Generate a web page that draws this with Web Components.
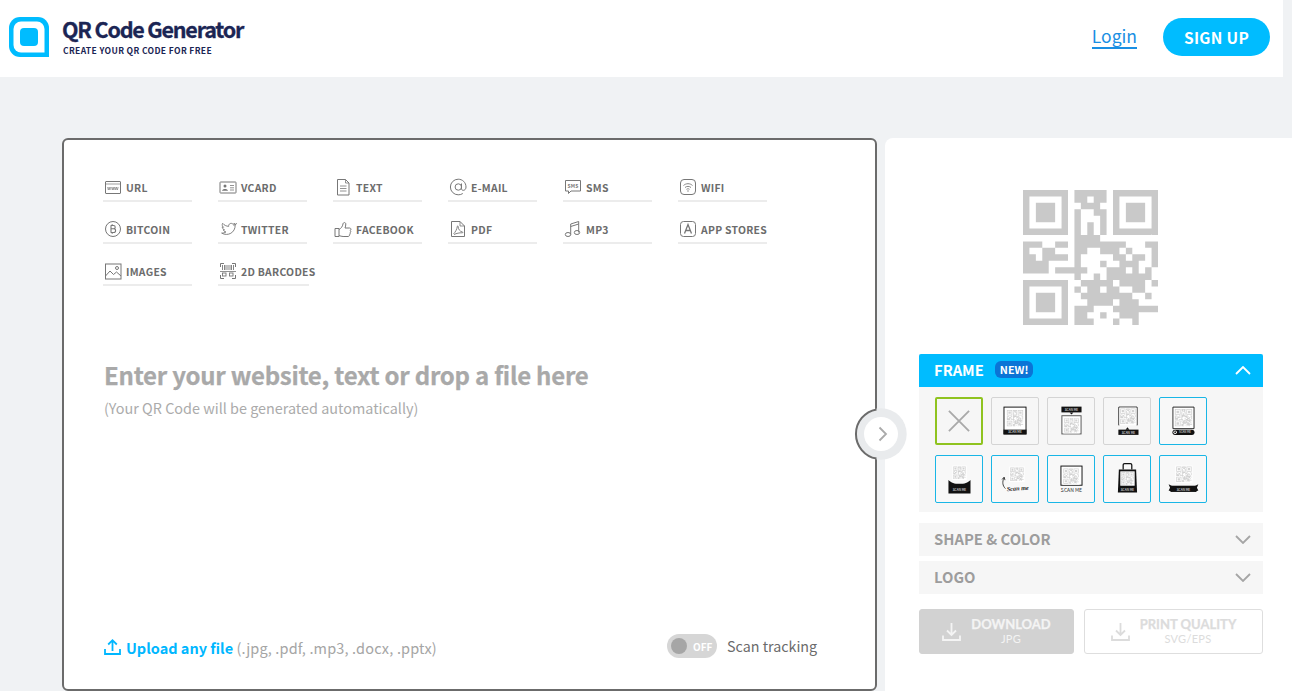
<!DOCTYPE html>
<html lang="en">
<head>
<meta charset="utf-8">
<title>QR Code Generator</title>
<style>
  html, body { margin: 0; height: 691px; overflow: hidden; background: #f0f2f4; }
  body { font-family: "Noto Sans CJK JP", "Source Sans Pro", "Open Sans", sans-serif; }
</style>
</head>
<body>
<qr-app></qr-app>
<script>
"use strict";

const QR_ROWS = [
  "111111101111101111111",
  "100000101101101000001",
  "101110100111001011101",
  "101110101001101011101",
  "101110101000101011101",
  "100000101010101000001",
  "111111101010101111111",
  "000000001111000000000",
  "111001101111111100011",
  "100110001100111010001",
  "110111101000001101101",
  "111100001000100111001",
  "111101111100011101010",
  "000000001001011111110",
  "111111100111110111101",
  "100000101011011001100",
  "101110100111111110010",
  "101110100011110111000",
  "101110101110001111111",
  "100000101100100111000",
  "111111101110001001000",
];

// path of the filled modules, at (x, y) with a given total size
function qrPath(x, y, size) {
  const m = size / 21;
  let d = "";
  QR_ROWS.forEach((row, r) => {
    [...row].forEach((cell, c) => {
      if (cell === "1") {
        d += `M${(x + c * m).toFixed(2)} ${(y + r * m).toFixed(2)}h${m.toFixed(2)}v${m.toFixed(2)}h-${m.toFixed(2)}z`;
      }
    });
  });
  return d;
}

const TAB_ICONS = {
  url: `<rect x="1.5" y="3.5" width="15" height="12" rx=".5"/><path d="M1.5 6h15" stroke-width=".7"/><path d="M3.5 9l.8 3 .8-3 .8 3 .8-3M7.5 9l.8 3 .8-3 .8 3 .8-3M11 9l.8 3 .8-3 .8 3 .8-3" stroke-width=".6"/>`,
  vcard: `<rect x="1" y="4" width="16" height="11" rx=".5"/><circle cx="6" cy="8" r="1.5" fill="#777" stroke="none"/><path d="M3 12.8c.5-2.5 5.500-2.500 6 0z" fill="#777" stroke="none"/><path d="M11 7.500h4M11 9.800h4M11 12h4" stroke-width=".8"/>`,
  text: `<path d="M3.500 1.500h8l3.500 3.500v12h-11.500z"/><path d="M11.500 1.500v3.500h3.500M6 8h6.500M6 10.500h6.500M6 13h6.500" stroke-width=".8"/>`,
  email: `<circle cx="9.300" cy="9" r="3.200"/><path d="M12.500 5.500v5.300c0 2.300 4.500 2.300 4.500-1.800 0-4.500-3.500-7.800-7.800-7.800a7.800 7.800 0 0 0 0 15.600c1.800 0 3.300-.4 4.600-1.300"/>`,
  sms: `<path d="M1.500 2.500h15v10.500h-9.500l-2.500 2.500v-2.500h-3z"/><text x="9" y="9.500" font-size="5" font-weight="700" text-anchor="middle" fill="#777" stroke="none" letter-spacing=".2">SMS</text>`,
  wifi: `<rect x="1.500" y="1.500" width="15" height="15" rx="3.500"/><path d="M4.500 7.500c2.500-2.400 6.500-2.400 9 0M6 9.500c1.700-1.500 4.300-1.500 6 0M7.500 11.300c.9-.7 2.100-.7 3 0" stroke-width=".9"/><circle cx="9" cy="13" r=".7" fill="#777" stroke="none"/>`,
  bitcoin: `<circle cx="9" cy="9" r="7.500"/><path d="M7 5.200v7.600M7 5.500h2.500c2.300 0 2.300 3.300 0 3.300h-2.500M9.500 8.800c2.800 0 2.800 3.700 0 3.700h-2.500M8.200 4.200v1.200M8.200 12.600v1.200" stroke-width="1.100"/>`,
  twitter: `<path d="M17 3.500c-.6.400-1.200.6-1.900.7.700-.5 1.100-1 1.300-1.800-.7.400-1.300.7-2 .8-1.900-2-5.200-.2-4.600 2.400-2.600-.1-5-1.300-6.600-3.300-.9 1.500-.4 3.300 1 4.300-.5 0-1-.2-1.400-.4 0 1.500 1 2.800 2.500 3.200-.5.100-.9.100-1.400 0 .4 1.300 1.600 2.200 2.900 2.200-1.400 1-3 1.500-4.700 1.300 6.700 4 15.100-.5 14.700-8.900.7-.4 1.300-1 1.700-1.500z" transform="matrix(.92 0 0 .92 .7 1.200)"/>`,
  facebook: `<path d="M1 8.500h4v8h-4zM5 9.500c2-1 3.500-3 4-5.500.2-1.800 2.600-2 2.800 0 .1 1.400-.4 2.800-.8 4h4.500c1.800 0 1.900 2.200.6 2.500 1 .6.800 2-.2 2.300.6.800.3 1.900-.6 2.100.3 1-.3 1.600-1.200 1.600h-5c-1.700 0-2.500-.6-4-.9"/>`,
  pdf: `<path d="M2.500 1.500h8.500l4.500 4.500v10.500h-13z"/><path d="M11 1.500v4.500h4.500" stroke-width=".8"/><path d="M4.500 13.800c1.500-1 3.500-4.500 3.800-7.300.1-1 1-.7.900.3-.2 2 1.800 4.800 4 5.100 1 .1.900 1-.1.900-2.600-.1-5.600.5-8.100 1.700" stroke-width=".9"/>`,
  mp3: `<ellipse cx="4" cy="14.500" rx="2.700" ry="2"/><ellipse cx="13" cy="12.500" rx="2.700" ry="2"/><path d="M6.700 14.500v-10.500l8-2.500v11M6.700 6.500l8-2.500"/>`,
  app: `<rect x="1.500" y="1.500" width="15" height="15" rx="3"/><path d="M5.500 13.500l3.500-9 3.500 9M6.700 10.500h4.600" stroke-width="1.300"/>`,
  images: `<rect x="1.500" y="2" width="15.500" height="15"/><path d="M1.500 14l4.500-5 3.500 3.500 3-2.500 4.500 4"/><circle cx="13" cy="6" r="1.500"/>`,
  barcodes: `<path d="M1.500 5v-3.500h3.500M13 1.500h3.500v3.500M1.500 13v3.500h3.500M13 16.500h3.500v-3.500"/><path d="M3.500 3v5M5.500 3v5M7 3v5M9 3v5M11 3v5M12.500 3v5M14.500 3v5" stroke-width=".9"/><path d="M1 9.500h16" stroke-width=".8"/><rect x="3.500" y="11" width="3.500" height="3" stroke-width=".9"/><rect x="10.500" y="11" width="3.500" height="3" stroke-width=".9"/>`,
};

class TabItem extends HTMLElement {
  constructor() {
    super();
    const icon = TAB_ICONS[this.getAttribute("icon")] || "";
    this.attachShadow({ mode: "open" }).innerHTML = `
      <style>
        :host { display: flex; align-items: center; gap: 4px; height: 23px; box-sizing: border-box;
          padding: 0 0 5px 1px; border-bottom: 2px solid #ececec; font-size: 10.400px; font-weight: 700;
          letter-spacing: .28px; color: #6c6c6c; white-space: nowrap; }
        svg { width: 18px; height: 18px; flex: none; fill: none; stroke: #777; stroke-width: 1; font-family: inherit; }
      </style>
      <svg viewBox="0 0 18 18">${icon}</svg><slot></slot>`;
  }
}
customElements.define("tab-item", TabItem);

class ConnectorArrow extends HTMLElement {
  constructor() {
    super();
    this.attachShadow({ mode: "open" }).innerHTML = `
      <style>
        :host { display: block; position: absolute; left: 790px; top: 267px; width: 54px; height: 54px; }
        svg { display: block; }
      </style>
      <svg width="54" height="54" viewBox="0 0 54 54" fill="none">
        <circle cx="27" cy="27" r="25.700" fill="#e9ebed"/>
        <path d="M22.500 2.400a25 25 0 0 0 0 49.200" stroke="#6b6b6b" stroke-width="2"/>
        <circle cx="27" cy="27" r="17" fill="#fff"/>
        <path d="M25.500 20.500l6.500 6.500-6.500 6.500" stroke="#aaa" stroke-width="1.800"/>
      </svg>`;
  }
}
customElements.define("connector-arrow", ConnectorArrow);

class MainCard extends HTMLElement {
  constructor() {
    super();
    this.attachShadow({ mode: "open" }).innerHTML = `
      <style>
        :host { display: flex; flex-direction: column; position: relative; box-sizing: border-box; flex: none;
          width: 815px; height: 553px; background: #fff; border: 2px solid #6b6b6b; border-radius: 6px;
          padding: 39px 0 0 39px; }
        .tabs { display: grid; grid-template-columns: repeat(6, 89px); column-gap: 26px; row-gap: 19px; }
        .tabs tab-item:last-child { width: 91px; }
        .prompt { flex: 1; padding: 70px 0 0 1px; }
        h1 { margin: 0; font-size: 24px; line-height: 38px; font-weight: 700; color: #a9a9a9; letter-spacing: -.25px; -webkit-text-stroke: .25px #a9a9a9; }
        p { margin: 2px 0 0; font-size: 14.400px; line-height: 24px; color: #ababab; }
        .foot { display: flex; align-items: center; height: 24px; margin-bottom: 31px; padding-left: 1px; font-size: 14.500px; }
        .upload { display: flex; align-items: center; gap: 5px; color: #a5a5a5; width: 563px; white-space: pre; padding-top: 2px; letter-spacing: .15px; }
        .upload b { color: #00b7ff; letter-spacing: 0; }
        .upload svg { width: 17px; height: 18px; flex: none; }
        .toggle { display: flex; align-items: center; width: 50px; height: 24px; box-sizing: border-box; padding-left: 4px; gap: 6px;
          border-radius: 12px; background: #d6d6d6; color: #fff; font-size: 10px; font-weight: 700; }
        .toggle i { width: 16px; height: 16px; border-radius: 50%; background: #a6a6a6; }
        .scan { margin: -2px 0 0 10px; color: #6b6b6b; font-size: 14.300px; }
      </style>
      <div class="tabs">
        <tab-item icon="url">URL</tab-item>
        <tab-item icon="vcard">VCARD</tab-item>
        <tab-item icon="text">TEXT</tab-item>
        <tab-item icon="email">E-MAIL</tab-item>
        <tab-item icon="sms">SMS</tab-item>
        <tab-item icon="wifi">WIFI</tab-item>
        <tab-item icon="bitcoin">BITCOIN</tab-item>
        <tab-item icon="twitter">TWITTER</tab-item>
        <tab-item icon="facebook">FACEBOOK</tab-item>
        <tab-item icon="pdf">PDF</tab-item>
        <tab-item icon="mp3">MP3</tab-item>
        <tab-item icon="app">APP STORES</tab-item>
        <tab-item icon="images">IMAGES</tab-item>
        <tab-item icon="barcodes">2D BARCODES</tab-item>
      </div>
      <div class="prompt">
        <h1>Enter your website, text or drop a file here</h1>
        <p>(Your QR Code will be generated automatically)</p>
      </div>
      <div class="foot">
        <div class="upload">
          <svg viewBox="0 0 17 18" fill="none" stroke="#00b7ff" stroke-width="1.800"><path d="M8.500 13V2.500M4.200 6.500l4.300-4.300 4.300 4.300M1 11v5h15v-5"/></svg>
          <span><b>Upload any file</b> (.jpg, .pdf, .mp3, .docx, .pptx)</span>
        </div>
        <div class="toggle"><i></i>OFF</div>
        <span class="scan">Scan tracking</span>
      </div>
      <connector-arrow></connector-arrow>`;
  }
}
customElements.define("main-card", MainCard);

const SANS = `font-family="'Noto Sans CJK JP', sans-serif"`;
const band = (x, y, w, h) =>
  `<rect x="${x}" y="${y}" width="${w}" height="${h}" fill="#111"/><text x="${x + w / 2}" y="${y + h - 1.400}" font-size="3.400" fill="#fff" text-anchor="middle" ${SANS}>SCAN ME</text>`;
const mini = (x, y, s) =>
  `<rect x="${x}" y="${y}" width="${s}" height="${s}" fill="#fff"/><path d="${qrPath(x + 1, y + 1, s - 2)}" fill="#d2d2d2"/>`;

const FRAME_ART = {
  none: `<path d="M13 13l22 22M35 13l-22 22" stroke="#a9a9a9" stroke-width="2" fill="none"/>`,
  plain: `<rect x="12.500" y="9.500" width="23" height="28" fill="#fff" stroke="#111"/>${mini(14.500, 11.500, 19)}${band(12, 33, 24, 5)}`,
  bubble: `${band(14, 9, 21, 6)}<path d="M22.500 15h4l-2 2.200z" fill="#111"/><rect x="14.500" y="18.500" width="20" height="19" fill="#fff" stroke="#555"/>${mini(16, 20, 17)}`,
  under: `<path d="M15.500 28.500v-19h19v19" fill="#fff" stroke="#111"/>${mini(16, 10, 18)}<path d="M22.500 33l2-2.500 2 2.500z" fill="#111"/>${band(15, 33, 21, 5.500)}`,
  pill: `<path d="M13.500 32v-22.500h22v22.500z" fill="#fff" stroke="#222"/>${mini(14.500, 10.500, 20)}<rect x="13" y="33" width="23" height="5.500" rx="2.700" fill="#111"/><circle cx="15.800" cy="35.700" r="1.800" fill="#fff"/><circle cx="15.800" cy="35.700" r=".9" fill="#111"/><text x="26" y="37" font-size="3" fill="#fff" text-anchor="middle" ${SANS}>SCAN ME</text>`,
  pocket: `${mini(17, 10, 15)}<path d="M13 25c3 3 6 4 11.500 4s8.500-1 11.500-4v14h-23z" fill="#111"/><text x="24.500" y="37" font-size="3.400" fill="#fff" text-anchor="middle" ${SANS}>SCAN ME</text>`,
  script: `${mini(18, 11, 16)}<path d="M12.500 23c-2 4-1.500 8 1.500 11M10.500 24.500l2.200-2.500.8 3.200" stroke="#111" stroke-width=".8" fill="none"/><text x="27" y="36" font-size="6.500" font-style="italic" font-weight="700" fill="#222" text-anchor="middle" transform="rotate(-4 27 36)" font-family="'Liberation Serif', serif">Scan me</text>`,
  outline: `<rect x="13.500" y="10.500" width="22" height="20" fill="#fff" stroke="#111"/>${mini(15, 12, 18)}<text x="24.500" y="38" font-size="5.300" fill="#333" text-anchor="middle" ${SANS}>SCAN ME</text>`,
  bag: `<path d="M20 14v-4.500c0-1 .5-1.500 1.500-1.500h6c1 0 1.500.5 1.500 1.500v4.500" stroke="#111" stroke-width="1.300" fill="none"/><path d="M15.500 14h18l1 24h-20z" fill="#111"/>${mini(17, 16, 15)}<text x="24.500" y="36.800" font-size="3.400" fill="#fff" text-anchor="middle" ${SANS}>SCAN ME</text>`,
  ribbon: `${mini(16, 10, 18)}<path d="M9 29.500l3 1.500v6l-3-1 1.500-3zM40 29.500l-3 1.500v6l3-1-1.500-3z" fill="#111"/>${band(11, 31, 27, 6.500)}`,
};

class FrameThumb extends HTMLElement {
  constructor() {
    super();
    this.attachShadow({ mode: "open" }).innerHTML = `
      <style>
        :host { display: block; box-sizing: border-box; width: 48px; height: 48px; border: 1px solid #d4d4d4; border-radius: 2px; background: #f6f6f6; }
        :host([tone="pro"]) { border-color: #19b6e6; background: #f8f8f8; }
        :host([tone="on"]) { border: 2px solid #8fc31f; }
        svg { display: block; width: 100%; height: 100%; }
      </style>
      <svg viewBox="0 0 48 48">${FRAME_ART[this.getAttribute("art")] || ""}</svg>`;
  }
}
customElements.define("frame-thumb", FrameThumb);

class AccordionSection extends HTMLElement {
  constructor() {
    super();
    this.attachShadow({ mode: "open" }).innerHTML = `
      <style>
        :host { display: block; background: #f6f6f6; }
        .bar { display: flex; align-items: center; box-sizing: border-box; height: 33px; padding: 0 12px 2px 15px; font-size: 14.800px; font-weight: 700; color: #9d9d9d; }
        .bar span { flex: 1; display: flex; align-items: center; gap: 11px; }
        :host([open]) .bar { background: #00bcff; color: #fff; border-radius: 2px 2px 0 0; }
        svg { width: 16px; height: 9px; fill: none; stroke: #a5a5a5; stroke-width: 1.800; margin-top: 2px; }
        :host([open]) svg { stroke: #fff; transform: scaleY(-1); }
        ::slotted([slot="badge"]) { font-size: 10.800px; line-height: 17px; padding: 0 5px; border-radius: 6px; background: #0b74d6; color: #fff; }
      </style>
      <div class="bar"><span><slot name="title"></slot><slot name="badge"></slot></span>
        <svg viewBox="0 0 16 9"><path d="M1 1l7 7 7-7"/></svg></div>
      <slot></slot>`;
  }
}
customElements.define("accordion-section", AccordionSection);

class ActionButton extends HTMLElement {
  constructor() {
    super();
    this.attachShadow({ mode: "open" }).innerHTML = `
      <style>
        :host { display: flex; align-items: center; justify-content: center; gap: 10px; box-sizing: border-box; height: 45px;
          border-radius: 3px; border: 1px solid #dedede; color: #dcdcdc; font-family: Lato, sans-serif; font-weight: 700; font-size: 13px; background: #fff; -webkit-text-stroke: .25px currentColor; }
        :host([solid]) { background: #d2d2d2; border-color: #d2d2d2; color: #f4f4f4; }
        svg { width: 19px; height: 19px; fill: none; stroke: currentColor; stroke-width: 1.800; flex: none; }
        .label { display: flex; flex-direction: column; align-items: center; line-height: 15px; }
        small { font-size: 11px; font-weight: 400; line-height: 14px; letter-spacing: .3px; -webkit-text-stroke: 0; }
      </style>
      <svg viewBox="0 0 19 19"><path d="M9.500 1v11.500M5 8.500l4.500 4.500 4.500-4.500M1 13.500v4.500h17v-4.500"/></svg>
      <div class="label"><slot></slot><small><slot name="sub"></slot></small></div>`;
  }
}
customElements.define("action-button", ActionButton);

class SidePanel extends HTMLElement {
  constructor() {
    super();
    this.attachShadow({ mode: "open" }).innerHTML = `
      <style>
        :host { display: block; flex: none; box-sizing: border-box; width: 407px; height: 553px; background: #fff;
          border-radius: 8px 0 0 0; padding: 52px 29px 0 34px; }
        .qr { display: block; width: 135px; height: 135px; margin: 0 0 29px 104px; }
        .stack { display: flex; flex-direction: column; gap: 5px; }
        .frames { display: grid; grid-template-columns: repeat(5, 48px); gap: 10px 8px; padding: 10px 16px 9px; }
        .stack > accordion-section:first-child { margin-bottom: 6px; }
        .actions { display: grid; grid-template-columns: 155px 179px; column-gap: 10px; margin-top: 15px; }
      </style>
      <svg class="qr" viewBox="0 0 135 135"><path fill="#c9c9c9" d="${qrPath(0, 0, 135)}"/></svg>
      <div class="stack">
        <accordion-section open>
          <span slot="title">FRAME</span><span slot="badge">NEW!</span>
          <div class="frames">
            <frame-thumb art="none" tone="on"></frame-thumb>
            <frame-thumb art="plain"></frame-thumb>
            <frame-thumb art="bubble"></frame-thumb>
            <frame-thumb art="under"></frame-thumb>
            <frame-thumb art="pill" tone="pro"></frame-thumb>
            <frame-thumb art="pocket" tone="pro"></frame-thumb>
            <frame-thumb art="script" tone="pro"></frame-thumb>
            <frame-thumb art="outline" tone="pro"></frame-thumb>
            <frame-thumb art="bag" tone="pro"></frame-thumb>
            <frame-thumb art="ribbon" tone="pro"></frame-thumb>
          </div>
        </accordion-section>
        <accordion-section><span slot="title">SHAPE &amp; COLOR</span></accordion-section>
        <accordion-section><span slot="title">LOGO</span></accordion-section>
      </div>
      <div class="actions">
        <action-button solid>DOWNLOAD<span slot="sub">JPG</span></action-button>
        <action-button>PRINT QUALITY<span slot="sub">SVG/EPS</span></action-button>
      </div>`;
  }
}
customElements.define("side-panel", SidePanel);

class SiteHeader extends HTMLElement {
  constructor() {
    super();
    this.attachShadow({ mode: "open" }).innerHTML = `
      <style>
        :host { display: flex; align-items: center; box-sizing: border-box; width: 1283px; height: 77px; background: #fff; padding: 0 13px 4px 9px; }
        .logo { width: 40px; height: 40px; flex: none; margin-right: 13px; }
        .brand { flex: 1; color: #1b2554; }
        .name { font-size: 21.500px; line-height: 26px; font-weight: 700; letter-spacing: -1.200px; margin-top: -2px; -webkit-text-stroke: .3px #1b2554; }
        .tag { font-size: 8.500px; line-height: 11px; font-weight: 700; letter-spacing: .36px; margin: 3px 0 0 1px; }
        a { color: #1a8fe3; font-size: 17.500px; line-height: 22px; border-bottom: 2px solid #1a8fe3; margin: 1px 26px 0 0; text-decoration: none; }
        .signup { width: 107px; height: 38px; border-radius: 19px; background: #00bcff; color: #fff; font-size: 15.500px; font-weight: 700;
          display: flex; align-items: center; justify-content: center; letter-spacing: .3px; }
      </style>
      <svg class="logo" viewBox="0 0 40 40">
        <path fill="#00bcff" d="M11 0h18a11 11 0 0 1 11 11v29h-29a11 11 0 0 1-11-11v-18a11 11 0 0 1 11-11z"/>
        <path fill="#fff" d="M12 4.500h16a7.500 7.500 0 0 1 7.500 7.500v23.500h-23.500a7.500 7.500 0 0 1-7.500-7.500v-16a7.500 7.500 0 0 1 7.500-7.500z"/>
        <rect x="11" y="11" width="18" height="18" rx="4" fill="#00bcff"/>
      </svg>
      <div class="brand">
        <div class="name">QR Code Generator</div>
        <div class="tag">CREATE YOUR QR CODE FOR FREE</div>
      </div>
      <a>Login</a>
      <div class="signup">SIGN UP</div>`;
  }
}
customElements.define("site-header", SiteHeader);

class QrApp extends HTMLElement {
  constructor() {
    super();
    this.attachShadow({ mode: "open" }).innerHTML = `
      <style>
        :host { display: block; width: 1292px; height: 691px; overflow: hidden; }
        main { display: flex; gap: 8px; padding: 61px 0 0 62px; }
      </style>
      <site-header></site-header>
      <main>
        <main-card></main-card>
        <side-panel></side-panel>
      </main>`;
  }
}
customElements.define("qr-app", QrApp);
</script>
</body>
</html>
